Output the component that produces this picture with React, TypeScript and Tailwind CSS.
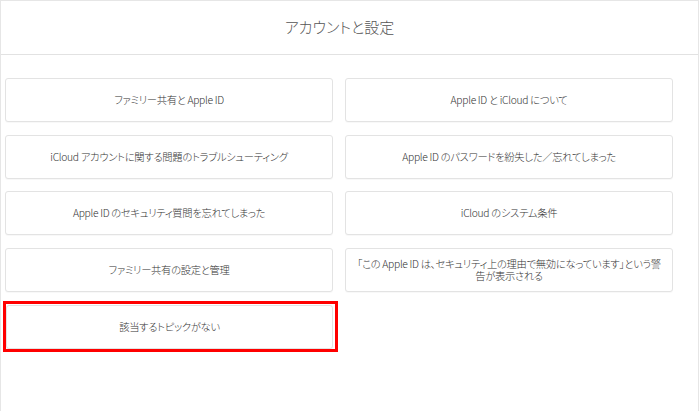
const topics = [
  "ファミリー共有と Apple ID",
  "Apple ID と iCloud について",
  "iCloud アカウントに関する問題のトラブルシューティング",
  "Apple ID のパスワードを紛失した／忘れてしまった",
  "Apple ID のセキュリティ質問を忘れてしまった",
  "iCloud のシステム条件",
  "ファミリー共有の設定と管理",
  "「この Apple ID は、セキュリティ上の理由で無効になっています」という警告が表示される",
];

function TopicCard({ label }: { label: string }) {
  return (
    <button className="h-[44px] w-full rounded-[3px] border border-[#e3e3e3] bg-white px-[8px] text-center text-[10.3px] font-light leading-[12px] tracking-[-0.3px] text-[#333] shadow-[0_1px_1px_rgba(0,0,0,0.03)]">
      {label}
    </button>
  );
}

export default function App() {
  return (
    <div
      className="h-[411px] w-[699px] overflow-hidden border-x border-t border-[#e6e6e6] bg-white [font-feature-settings:'palt']"
      style={{ fontFamily: '"Noto Sans CJK JP", "Noto Sans", sans-serif' }}
    >
      <header className="flex h-[54px] items-center justify-center border-b border-[#e2e2e2] pr-[20px]">
        <h1 className="text-[15px] font-light text-[#555]">アカウントと設定</h1>
      </header>

      <div className="pl-[4px] pt-[23px]">
        <div className="grid w-[668px] grid-cols-2 gap-x-[12px] gap-y-[12.7px]">
          {topics.map((t) => (
            <TopicCard key={t} label={t} />
          ))}
          <div className="relative ml-[1px]">
            <TopicCard label="該当するトピックがない" />
            <div className="pointer-events-none absolute -bottom-[3px] -left-[3px] -right-[5px] -top-[4px] border-[3px] border-[#ff0000]" />
          </div>
        </div>
      </div>
    </div>
  );
}
